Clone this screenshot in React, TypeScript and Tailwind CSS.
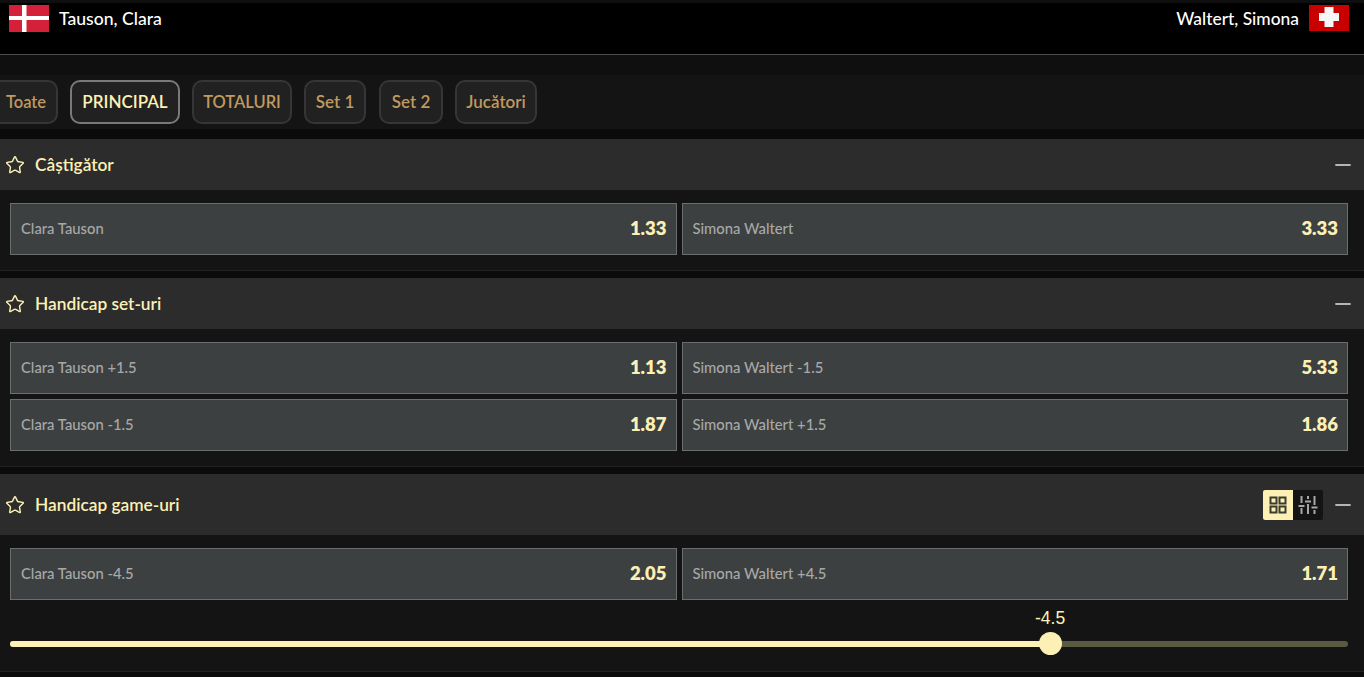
import React from "react";
import { Star, Minus } from "lucide-react";

const font = "font-['Lato','Noto_Sans',sans-serif]";

function Odd({ label, odd }: { label: string; odd: string }) {
  return (
    <div className="flex h-[52px] flex-1 items-center justify-between border border-[#6b6e6f] bg-[#3c4041] pl-[10px] pr-[9px]">
      <span className="pb-[1px] text-[14.8px] font-medium text-[#a8a8a8]">{label}</span>
      <span className="text-[18.5px] font-extrabold text-[#fdf0b5]">{odd}</span>
    </div>
  );
}

function Row({ a, b }: { a: [string, string]; b: [string, string] }) {
  return (
    <div className="flex gap-[5px]">
      <Odd label={a[0]} odd={a[1]} />
      <Odd label={b[0]} odd={b[1]} />
    </div>
  );
}

function Header({ title, h, children }: { title: string; h: string; children?: React.ReactNode }) {
  return (
    <div className={`flex items-center justify-between bg-[#2c2c2c] pl-[5px] pr-[9px] ${h}`}>
      <div className="flex items-center gap-[10px]">
        <Star size={20} strokeWidth={1.7} className="text-[#fdf0b5]" />
        <span className="text-[17.3px] font-semibold text-[#fdf0b5]">{title}</span>
      </div>
      <div className="flex items-center gap-[8px]">
        {children}
        <Minus size={24} strokeWidth={1.8} className="text-[#b5b5b5]" />
      </div>
    </div>
  );
}

function Tab({ label, active, className }: { label: string; active?: boolean; className?: string }) {
  return (
    <div
      className={`flex h-[44px] items-center justify-center rounded-[10px] border-2 bg-[#212121] font-semibold ${
        active ? "border-[#7a7a7a] bg-[#2a2a2a] text-[#fdf0b5]" : "border-[#363636] text-[#c09a5e]"
      } ${className ?? ""}`}
    >
      {label}
    </div>
  );
}

function Denmark() {
  return (
    <svg width="40" height="27" viewBox="0 0 40 27" className="block">
      <rect width="40" height="27" fill="#d5203a" />
      <rect x="13" width="4.500" height="27" fill="#fff" />
      <rect y="11" width="40" height="4" fill="#fff" />
    </svg>
  );
}

function Swiss() {
  return (
    <svg width="40" height="26" viewBox="0 0 40 26" className="block">
      <rect width="40" height="26" fill="#c80000" />
      <rect x="15.500" y="2" width="9" height="20" fill="#f6f6f6" />
      <rect x="10" y="8" width="20" height="8" fill="#f6f6f6" />
    </svg>
  );
}

export default function App() {
  return (
    <div className={`h-[677px] w-[1364px] overflow-hidden bg-[#0b0b0b] ${font}`}>
      <div className="flex h-[55px] items-start justify-between border-b border-t-[3px] border-b-[#4c4c4c] border-t-[#0f0f0f] bg-black pl-[9px] pr-[15px] pt-[1px]">
        <div className="flex items-center gap-[10px]">
          <Denmark />
          <span className="pt-[2px] text-[17.6px] font-medium text-white">Tauson, Clara</span>
        </div>
        <div className="flex items-center gap-[10px]">
          <span className="pt-[2px] text-[17.4px] font-medium text-white">Waltert, Simona</span>
          <Swiss />
        </div>
      </div>
      <div className="h-[20px] bg-[#0f0f0f]" />
      <div className="flex h-[54px] items-center gap-[12px] overflow-hidden bg-[#141414]">
        <Tab label="Toate" className="ml-[-10px] w-[68px] pl-[4px] text-[16.5px]" />
        <Tab label="PRINCIPAL" active className="w-[110px] text-[17px]" />
        <Tab label="TOTALURI" className="w-[100px] text-[16.5px]" />
        <Tab label="Set 1" className="mr-[1px] w-[62px] text-[17px]" />
        <Tab label="Set 2" className="w-[64px] text-[17px]" />
        <Tab label="Jucători" className="w-[82px] text-[17px]" />
      </div>
      <div className="h-[10px]" />
      <Header title="Câștigător" h="h-[51px]" />
      <div className="flex h-[81px] flex-col gap-[5px] border-b border-[#212121] bg-[#141414] pl-[10px] pr-[16px] pt-[13px]">
        <Row a={["Clara Tauson", "1.33"]} b={["Simona Waltert", "3.33"]} />
      </div>
      <div className="h-[7px]" />
      <Header title="Handicap set-uri" h="h-[51px]" />
      <div className="flex h-[138px] flex-col gap-[5px] border-b border-[#212121] bg-[#141414] pl-[10px] pr-[16px] pt-[13px]">
        <Row a={["Clara Tauson +1.5", "1.13"]} b={["Simona Waltert -1.5", "5.33"]} />
        <Row a={["Clara Tauson -1.5", "1.87"]} b={["Simona Waltert +1.5", "1.86"]} />
      </div>
      <div className="h-[7px]" />
      <Header title="Handicap game-uri" h="h-[61px]">
        <div className="flex h-[30px] w-[60px] overflow-hidden rounded-[2px] bg-[#141414]">
          <div className="flex w-[30px] items-center justify-center bg-[#fdf0b5]">
            <svg width="18" height="18" viewBox="0 0 18 18" fill="none" stroke="#3a3a30" strokeWidth="2">
              <rect x="1.500" y="1.500" width="6" height="6" />
              <rect x="10.500" y="1.500" width="6" height="6" />
              <rect x="1.500" y="10.500" width="6" height="6" />
              <rect x="10.500" y="10.500" width="6" height="6" />
            </svg>
          </div>
          <div className="flex w-[30px] items-center justify-center">
            <svg width="20" height="20" viewBox="0 0 20 20" fill="none" stroke="#a8a8a8" strokeWidth="2">
              <path d="M3.500 1v7M3.500 13v6M0.500 11h6M10 1v3M10 9v10M7 6.500h6M16.500 1v9M16.500 15v4M13.500 12.500h6" />
            </svg>
          </div>
        </div>
      </Header>
      <div className="flex h-[137px] flex-col border-b border-[#212121] bg-[#141414] pl-[10px] pr-[16px] pt-[13px]">
        <Row a={["Clara Tauson -4.5", "2.05"]} b={["Simona Waltert +4.5", "1.71"]} />
        <div className="relative mt-[5px] h-[62px]">
          <span className="absolute left-[1025px] top-0 font-['Liberation_Sans',sans-serif] text-[17.5px] font-medium text-[#fdf0b5]">-4.5</span>
          <div className="absolute left-0 right-0 top-[36px] flex h-[6px] overflow-hidden rounded-full bg-[#5c5943]">
            <div className="h-full w-[1040px] bg-[#fdf0b5]" />
          </div>
          <div className="absolute left-[1029px] top-[27px] h-[23px] w-[23px] rounded-full bg-[#fdf0b5]" />
        </div>
      </div>
    </div>
  );
}
